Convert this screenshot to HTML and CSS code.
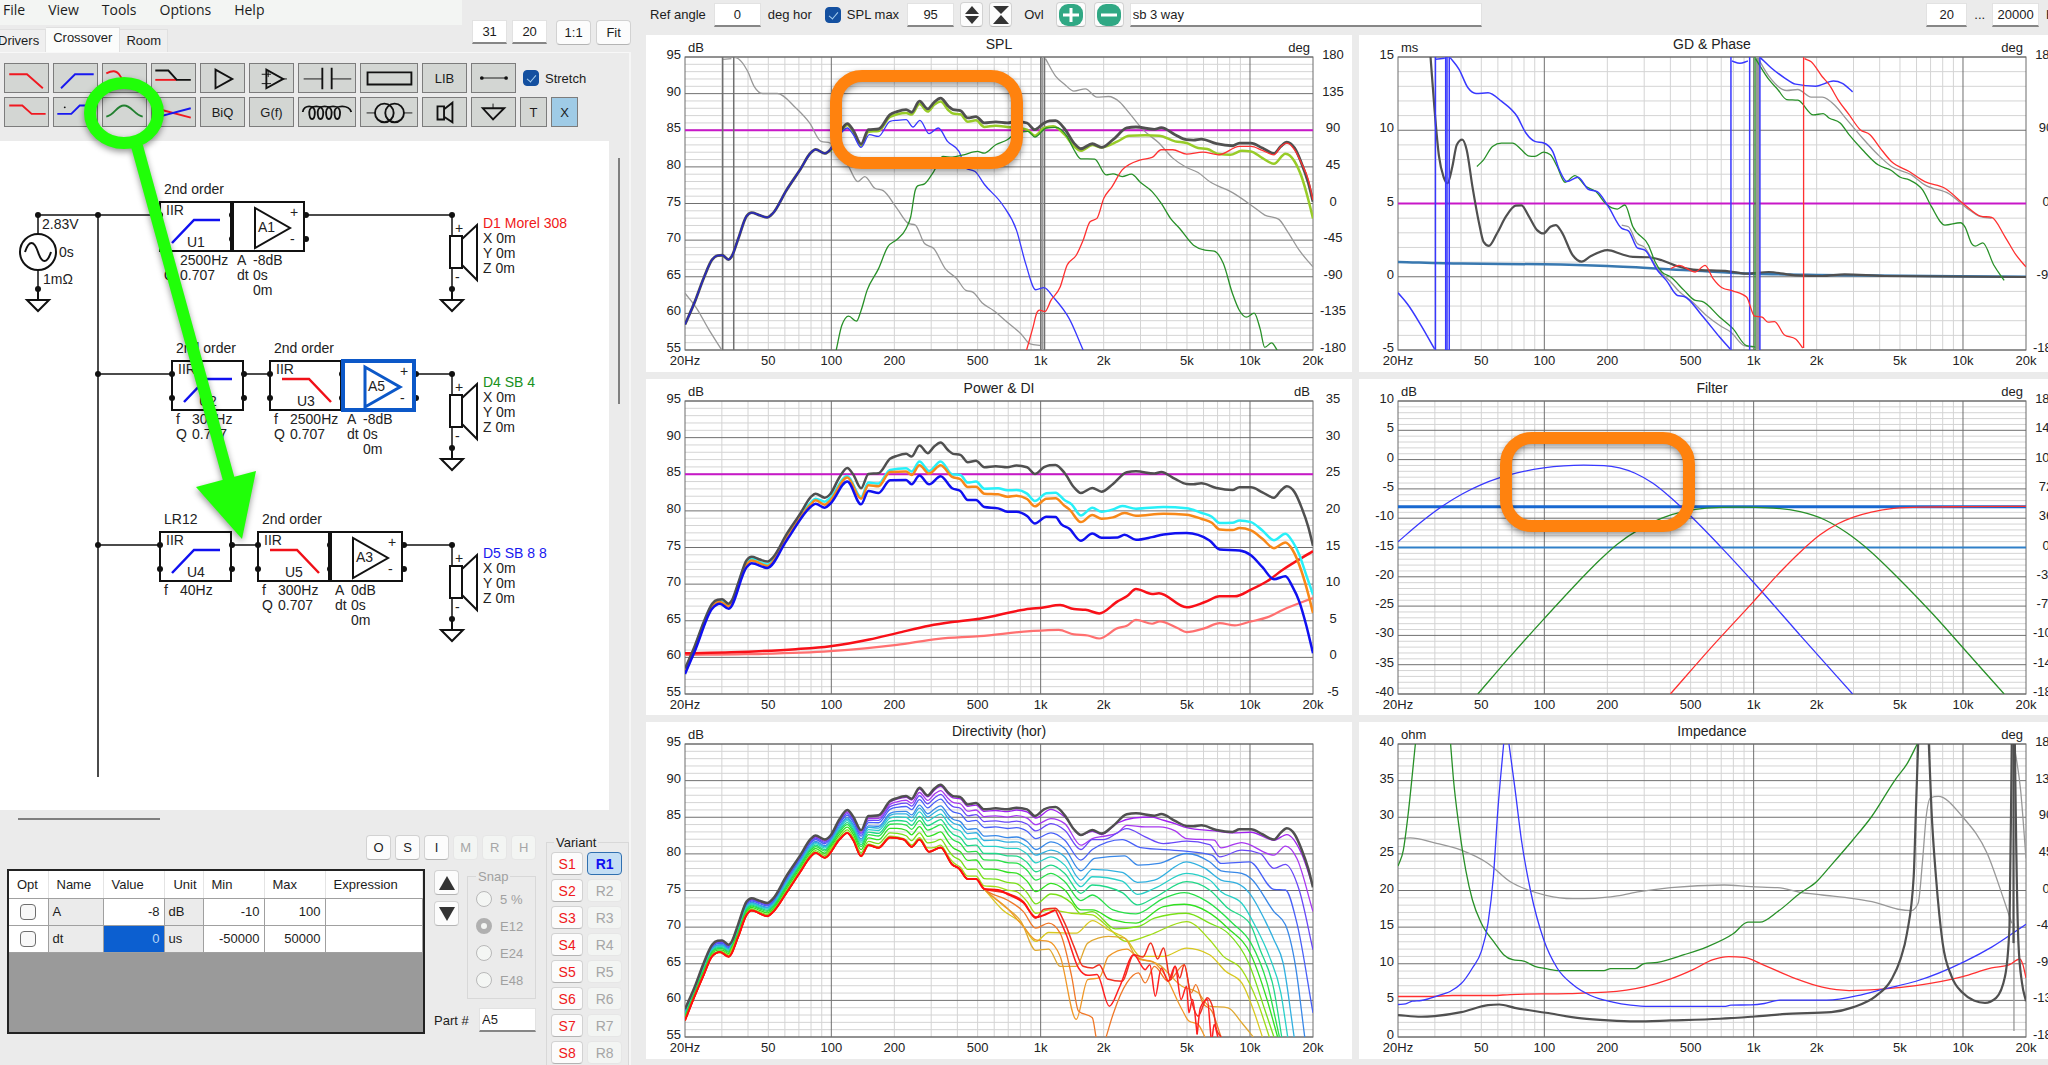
FILE: index.html
```html
<!DOCTYPE html>
<html lang="en">
<head>
    <meta charset="UTF-8">
    <meta name="viewport" content="width=device-width, initial-scale=1.0">
    <title>Crossover</title>
    <link rel="stylesheet" href="styles.css">
</head>
<body>
<div class="app">

    <aside class="side">
        <div class="side-top">
            <div class="top-left">
                <nav class="menu">
                    <a href="#">File</a>
                    <a href="#">View</a>
                    <a href="#">Tools</a>
                    <a href="#">Options</a>
                    <a href="#">Help</a>
                </nav>
                <div class="tabs">
                    <button class="tab">Drivers</button>
                    <button class="tab active">Crossover</button>
                    <button class="tab">Room</button>
                </div>
            </div>
            <div class="zoom-box">
                <input class="field" type="text" value="31" aria-label="Grid width">
                <input class="field" type="text" value="20" aria-label="Grid height">
                <button class="btn">1:1</button>
                <button class="btn">Fit</button>
            </div>
        </div>

        <div class="tab-page">
            <div class="parts">
                <div class="parts-row">
                    <button class="part" aria-label="Low pass"><svg viewBox="0 0 45 30"><path class="r" d="M4 11H23L40 26"/></svg></button>
                    <button class="part" aria-label="High pass"><svg viewBox="0 0 45 30"><path class="b" d="M7 26L22 11H42"/></svg></button>
                    <button class="part" aria-label="Resonant low pass"><svg viewBox="0 0 45 30"><path class="r" d="M3 10C9 7 14 6 18 13L25 24"/></svg></button>
                    <button class="part" aria-label="Low shelf"><svg viewBox="0 0 45 30"><path class="r" d="M3 17H26"/><path class="k" d="M3 7H17L26 17H41"/></svg></button>
                    <button class="part" aria-label="Amplifier"><svg viewBox="0 0 45 30"><path class="k" d="M15 6V26L33 16Z"/></svg></button>
                    <button class="part" aria-label="Op amp"><svg viewBox="0 0 45 30"><path class="k" d="M17 6V26L35 16Z"/><path class="w" d="M12 11H22M12 21H22M35 16H39M19 8V14"/></svg></button>
                    <button class="part wide" aria-label="Capacitor"><svg viewBox="0 0 60 30"><path class="w" d="M5 16H25M35 16H56"/><path class="k" d="M25 4V27M35 4V27"/></svg></button>
                    <button class="part wide" aria-label="Resistor"><svg viewBox="0 0 60 30"><path class="k" d="M7 9H54V22H7Z"/></svg></button>
                    <button class="part">LIB</button>
                    <button class="part" aria-label="Wire"><svg viewBox="0 0 45 30"><path class="w" d="M10 15H36"/><circle cx="10" cy="15" r="2"/><circle cx="36" cy="15" r="2"/></svg></button>
                    <label class="check"><input type="checkbox" checked> Stretch</label>
                </div>
                <div class="parts-row">
                    <button class="part" aria-label="Shelf"><svg viewBox="0 0 45 30"><path class="r" d="M4 8H18L28 17H43"/></svg></button>
                    <button class="part" aria-label="High shelf"><svg viewBox="0 0 45 30"><path class="b" d="M3 17H18L27 8H42"/><circle cx="11" cy="10" r="1"/></svg></button>
                    <button class="part" aria-label="Peak"><svg viewBox="0 0 45 30"><path class="g" d="M3 20C12 18 14 8 22 8S33 18 42 20"/></svg></button>
                    <button class="part" aria-label="Tilt"><svg viewBox="0 0 45 30"><path class="r" d="M3 11L41 21"/><path class="b" d="M3 21L41 11"/></svg></button>
                    <button class="part">BiQ</button>
                    <button class="part">G(f)</button>
                    <button class="part wide" aria-label="Inductor"><svg viewBox="0 0 60 30"><path class="k" d="M4 15C5 7 17 7 17 15C17 25 11 25 11 15C11 7 26 7 26 15C26 25 20 25 20 15C20 7 35 7 35 15C35 25 29 25 29 15C29 7 44 7 44 15C44 25 38 25 38 15C38 7 54 7 56 15"/></svg></button>
                    <button class="part wide" aria-label="Transformer"><svg viewBox="0 0 60 30"><circle class="k" cx="25" cy="16" r="10"/><circle class="k" cx="36" cy="16" r="10"/><path class="w" d="M6 16H15M46 16H55"/></svg></button>
                    <button class="part" aria-label="Driver"><svg viewBox="0 0 45 30"><path class="k" d="M15 9H22V23H15ZM22 12L31 5V26L22 20"/></svg></button>
                    <button class="part" aria-label="Ground"><svg viewBox="0 0 45 30"><path class="k" d="M11 11H34L22 23Z"/><path class="w" d="M22 6V11"/></svg></button>
                    <button class="part small">T</button>
                    <button class="part small on">X</button>
                </div>
            </div>

            <div class="canvas-wrap">
                <svg class="schematic" id="schematic" role="img" aria-label="Crossover schematic"></svg>
                <div class="vscroll"></div>
            </div>
            <div class="hscroll"></div>

            <div class="lower">
                <div class="inspector">
                    <div class="modes">
                        <button class="btn">O</button>
                        <button class="btn">S</button>
                        <button class="btn">I</button>
                        <button class="btn" disabled>M</button>
                        <button class="btn" disabled>R</button>
                        <button class="btn" disabled>H</button>
                    </div>
                    <div class="inspector-row">
                        <div class="grid-box">
                            <table>
                                <colgroup>
                                    <col class="c-opt"><col class="c-name"><col class="c-num"><col class="c-opt"><col class="c-num"><col class="c-num"><col>
                                </colgroup>
                                <thead>
                                    <tr><th>Opt</th><th>Name</th><th>Value</th><th>Unit</th><th>Min</th><th>Max</th><th>Expression</th></tr>
                                </thead>
                                <tbody>
                                    <tr>
                                        <td class="opt"><input type="checkbox" aria-label="Optimize A"></td>
                                        <td class="fixed">A</td><td class="num">-8</td><td class="fixed">dB</td>
                                        <td class="num">-10</td><td class="num">100</td><td></td>
                                    </tr>
                                    <tr>
                                        <td class="opt"><input type="checkbox" aria-label="Optimize dt"></td>
                                        <td class="fixed">dt</td><td class="num selected">0</td><td class="fixed">us</td>
                                        <td class="num">-50000</td><td class="num">50000</td><td></td>
                                    </tr>
                                </tbody>
                            </table>
                        </div>
                        <div class="tune">
                            <div class="tune-row">
                                <div class="arrows">
                                    <button class="btn" aria-label="Up"><svg viewBox="0 0 16 14"><path d="M8 0L16 14H0Z"/></svg></button>
                                    <button class="btn" aria-label="Down"><svg viewBox="0 0 16 14"><path d="M8 14L16 0H0Z"/></svg></button>
                                </div>
                                <fieldset class="snap" disabled>
                                    <legend>Snap</legend>
                                    <label><input type="radio" name="snap"> 5 %</label>
                                    <label><input type="radio" name="snap" checked> E12</label>
                                    <label><input type="radio" name="snap"> E24</label>
                                    <label><input type="radio" name="snap"> E48</label>
                                </fieldset>
                            </div>
                            <div class="part-id">
                                <label for="partNo">Part #</label>
                                <input class="field" id="partNo" type="text" value="A5">
                            </div>
                        </div>
                    </div>
                </div>
                <fieldset class="variant">
                    <legend>Variant</legend>
                    <div class="variant-grid" id="variants"></div>
                </fieldset>
            </div>
        </div>

        <svg class="marker" width="300" height="560">
            <ellipse cx="124" cy="113" rx="34" ry="30"/>
            <path d="M137 146L229 480"/>
            <path class="head" d="M196 487L256 471L242 539Z"/>
        </svg>
    </aside>

    <main class="work">
        <div class="toolbar">
            <label for="refAngle">Ref angle</label>
            <input class="field num-field" id="refAngle" type="text" value="0">
            <span class="unit">deg hor</span>
            <label class="check"><input type="checkbox" checked> SPL max</label>
            <input class="field num-field" type="text" value="95" aria-label="SPL max">
            <button class="btn icon-btn" aria-label="Expand range"><svg viewBox="0 0 16 18"><path d="M8 0L15 8H1ZM8 18L15 10H1Z"/></svg></button>
            <button class="btn icon-btn" aria-label="Shrink range"><svg viewBox="0 0 16 18"><path d="M0 0H16L8 8ZM8 9L16 18H0Z"/></svg></button>
            <label class="ovl" for="overlay">Ovl</label>
            <button class="btn round-btn" aria-label="Add overlay"><svg viewBox="0 0 24 22"><rect width="24" height="22" rx="9"/><path d="M12 4V18M4 11H20"/></svg></button>
            <button class="btn round-btn" aria-label="Remove overlay"><svg viewBox="0 0 24 22"><rect width="24" height="22" rx="9"/><path d="M4 11H20"/></svg></button>
            <input class="field overlay" id="overlay" type="text" value="sb 3 way">
            <div class="freq">
                <input class="field low" type="text" value="20" aria-label="From">
                <span>...</span>
                <input class="field high" type="text" value="20000" aria-label="To">
                <span>Hz</span>
            </div>
        </div>
        <div class="charts">
            <section class="chart" id="spl"><div class="highlight spl-highlight"></div></section>
            <section class="chart" id="gd"></section>
            <section class="chart" id="power"></section>
            <section class="chart" id="filter"><div class="highlight filter-highlight"></div></section>
            <section class="chart" id="directivity"></section>
            <section class="chart" id="impedance"></section>
        </div>
    </main>
</div>
<script src="script.js"></script>
</body>
</html>
```

FILE: styles.css
```css
* {
    box-sizing: border-box;
}

body {
    margin: 0;
    background: #ebebeb;
    color: #1c1c1c;
    font-family: "Liberation Sans", Arial, sans-serif;
    font-size: 13px;
    overflow: hidden;
}

button, input {
    font: inherit;
    color: inherit;
    margin: 0;
}

.app {
    display: grid;
    grid-template-columns: minmax(640px, 31.5%) 1fr;
    height: 100vh;
}

/* shared controls */
.field {
    height: 24px;
    padding: 0 4px;
    border: 1px solid #e2e2e2;
    border-bottom: 2px solid #868686;
    background: #fff;
}

.btn {
    height: 25px;
    padding: 0;
    border: 1px solid #d2d2d2;
    border-bottom-color: #b4b4b4;
    border-radius: 4px;
    background: #fcfcfc;
    display: flex;
    align-items: center;
    justify-content: center;
}

.btn:disabled {
    color: #a6a6a6;
    background: #f3f5f3;
    border-color: #e6e6e6;
}

.check {
    display: flex;
    align-items: center;
    gap: 6px;
    white-space: nowrap;
}

input[type="checkbox"] {
    appearance: none;
    position: relative;
    width: 16px;
    height: 16px;
    border: 1px solid #6e6e6e;
    border-radius: 4px;
    background: #f8f8f8;
}

input[type="checkbox"]:checked {
    background: #1450a0;
    border-color: #1450a0;
}

input[type="checkbox"]:checked::after {
    content: "";
    position: absolute;
    left: 5px;
    top: 2px;
    width: 4px;
    height: 8px;
    border: solid #a8d0f0;
    border-width: 0 1px 1px 0;
    transform: rotate(40deg);
}

/* left side */
.side {
    position: relative;
    display: flex;
    flex-direction: column;
    min-width: 0;
    height: 100vh;
    padding-right: 14px;
    overflow: hidden;
}

.side-top {
    display: flex;
    justify-content: space-between;
    height: 52px;
}

.menu {
    display: flex;
    gap: 23px;
    width: 462px;
    height: 25px;
    padding: 0 3px;
    background: #f3f5f3;
    font-family: "Open Sans", sans-serif;
    font-size: 14px;
    line-height: 20px;
}

.menu a {
    color: inherit;
    text-decoration: none;
}

.tabs {
    display: flex;
    align-items: flex-end;
    height: 27px;
    margin-left: -8px;
}

.tab {
    height: 23px;
    padding: 0 6px 2px;
    border: 1px solid #e0e0e0;
    border-width: 1px 1px 0 0;
    background: #efefef;
}

.tab.active {
    height: 25px;
    padding: 0 7px 5px;
    background: #fbfcfb;
}

.zoom-box {
    display: flex;
    gap: 5px;
    padding-top: 20px;
}

.zoom-box .field {
    width: 35px;
    text-align: center;
}

.zoom-box .btn {
    width: 35px;
}

.zoom-box .btn:nth-of-type(1) {
    margin-left: 4px;
}

.tab-page {
    flex: 1;
    display: flex;
    flex-direction: column;
    min-height: 0;
    border-top: 1px solid #f8f8f8;
    border-right: 2px solid #f6f6f6;
}

.parts {
    display: flex;
    flex-direction: column;
    gap: 4px;
    padding: 10px 4px 14px;
}

.parts-row {
    display: flex;
    gap: 4px;
}

.part {
    flex: none;
    width: 45px;
    height: 30px;
    padding: 0;
    border: 1px solid #7c7c7c;
    background: #d3d6d3;
}

.part.wide {
    width: 58px;
}

.part.small {
    width: 27px;
}

.part.on {
    background: #9fcbe6;
}

.part svg {
    display: block;
    width: 100%;
    height: 100%;
    fill: #111;
}

.part path, .part circle.k {
    fill: none;
    stroke-width: 2;
}

.part .r { stroke: #f01820; }
.part .b { stroke: #1818f0; }
.part .g { stroke: #228030; }
.part .k { stroke: #111; }
.part .w { stroke: #111; stroke-width: 1; }

.parts .check {
    margin-left: 3px;
}

.canvas-wrap {
    flex: 1;
    display: flex;
    gap: 9px;
    min-height: 0;
}

.schematic {
    flex: 1;
    min-width: 0;
    height: 100%;
    background: #fff;
    font-size: 14px;
    fill: #222;
}

.vscroll {
    width: 2px;
    height: 246px;
    margin: 17px 9px 0 0;
    background: #808080;
}

.hscroll {
    width: 142px;
    height: 2px;
    margin: 8px 0 0 18px;
    background: #808080;
}

.lower {
    display: flex;
    justify-content: space-between;
    gap: 10px;
    height: 245px;
    padding: 15px 0 0 7px;
}

.inspector {
    flex: 1;
}

.modes {
    display: flex;
    justify-content: flex-end;
    gap: 4px;
}

.modes .btn {
    width: 25px;
}

.inspector-row {
    display: flex;
    gap: 9px;
    margin-top: 9px;
}

.grid-box {
    flex: 1;
    height: 165px;
    border: 2px solid #222;
    background: #9a9a9a;
}

table {
    width: 100%;
    border-collapse: collapse;
    table-layout: fixed;
    background: #fff;
}

.c-opt { width: 39px; }
.c-name { width: 55px; }
.c-num { width: 61px; }

th, td {
    height: 27px;
    padding: 0 4px;
    border-right: 1px solid #a0a0a0;
    border-bottom: 1px solid #a0a0a0;
    font-weight: normal;
    text-align: left;
}

th {
    padding: 0 8px;
    border-right-color: #e4e4e4;
}

th:nth-child(4) {
    padding-right: 6px;
    text-align: right;
}

.opt input {
    display: block;
    margin: auto;
}

.fixed { background: #ebebeb; }
.num { text-align: right; }

.selected {
    background: #0c5fd0;
    color: #b8d8f8;
}

.tune {
    width: 102px;
}

.tune-row {
    display: flex;
    gap: 8px;
}

.arrows {
    display: flex;
    flex-direction: column;
    gap: 6px;
    padding-top: 1px;
}

.arrows .btn {
    width: 25px;
}

.arrows svg {
    width: 16px;
    height: 14px;
    fill: #333;
}

fieldset {
    margin: 0;
    min-width: 0;
    border: 1px solid #d8d8d8;
}

.snap {
    flex: 1;
    height: 130px;
    padding: 7px 8px;
    color: #a0a0a0;
    display: flex;
    flex-direction: column;
    gap: 11px;
}

.snap label {
    display: flex;
    align-items: center;
    gap: 8px;
    height: 16px;
    white-space: nowrap;
}

legend {
    padding: 0 2px;
}

.snap input {
    appearance: none;
    width: 16px;
    height: 16px;
    border: 1px solid #b8b8b8;
    border-radius: 50%;
    background: #f4f6f4;
}

.snap input:checked {
    border: 5px solid #b0b0b0;
}

.part-id {
    display: flex;
    align-items: center;
    justify-content: space-between;
    margin-top: 9px;
}

.part-id .field {
    width: 57px;
    padding: 0 2px;
}

.variant {
    width: 83px;
    height: 260px;
    padding: 2px 4px;
}

.variant legend {
    margin-left: 3px;
}

.variant-grid {
    display: grid;
    grid-template-columns: 32px 35px;
    gap: 4px;
}

.variant-grid .btn {
    height: 23px;
    font-size: 14px;
}

.variant-grid .store {
    color: #f01820;
}

.variant-grid .current {
    border-color: #3070b0;
    background: #c4def4;
    color: #1010f0;
    font-weight: bold;
}

.marker {
    position: absolute;
    left: 0;
    top: 0;
    pointer-events: none;
    filter: drop-shadow(0 3px 3px rgba(0, 0, 0, 0.4));
    fill: none;
    stroke: #20ff08;
    stroke-width: 12;
}

.marker .head {
    fill: #20ff08;
    stroke: none;
}

/* right side */
.work {
    display: flex;
    flex-direction: column;
    min-width: 0;
    height: 100vh;
    overflow: hidden;
}

.toolbar {
    display: flex;
    align-items: center;
    height: 29px;
    margin: 0 -14px 6px 5px;
    white-space: nowrap;
}

.num-field {
    width: 47px;
    margin-left: 8px;
    text-align: center;
}

.unit {
    margin: 0 13px 0 7px;
}

.icon-btn {
    width: 23px;
    margin-left: 6px;
}

.icon-btn svg {
    width: 16px;
    height: 18px;
    fill: #333;
}

.ovl {
    margin: 0 4px 0 12px;
}

.round-btn {
    width: 30px;
    margin-left: 8px;
}

.round-btn svg {
    width: 24px;
    height: 22px;
}

.round-btn rect { fill: #30a884; }
.round-btn path { stroke: #fff; stroke-width: 3; }

.overlay {
    width: 352px;
    margin-left: 6px;
    padding: 0 2px;
}

.freq {
    display: flex;
    align-items: center;
    gap: 7px;
    margin-left: auto;
}

.freq .field {
    text-align: center;
    padding: 0;
}

.freq .low { width: 41px; }
.freq .high { width: 47px; }

.charts {
    flex: 1;
    display: grid;
    grid-template-columns: 1fr 1fr;
    grid-template-rows: repeat(3, minmax(0, 1fr));
    gap: 7px;
    min-height: 0;
    margin: 0 -17px 6px 1px;
}

.chart {
    position: relative;
    min-width: 0;
    background: #fff;
}

.chart-svg {
    display: block;
    width: 100%;
    height: 100%;
    fill: #222;
}

.chart-title {
    font-size: 14px;
}

.frame { fill: none; stroke: #6c6c6c; }
.minor { stroke: #d4d4d4; }
.major { stroke: #707070; }

.trace {
    fill: none;
    vector-effect: non-scaling-stroke;
    stroke-linejoin: round;
}

.highlight {
    position: absolute;
    border: 12px solid #ff820e;
    border-radius: 32px;
    filter: drop-shadow(0 3px 3px rgba(0, 0, 0, 0.4));
}

.spl-highlight {
    left: 26%;
    top: 35px;
    width: 193px;
    height: 99px;
}

.filter-highlight {
    left: 20%;
    top: 53px;
    width: 195px;
    height: 100px;
}
```

FILE: script.js
```js
// Variant buttons
const variants = document.getElementById('variants');
for (let i = 1; i <= 8; i++) {
    const store = document.createElement('button');
    store.className = 'btn store';
    store.innerText = 'S' + i;
    const recall = document.createElement('button');
    recall.className = 'btn';
    recall.innerText = 'R' + i;
    if (i === 1) {
        recall.classList.add('current');
    } else {
        recall.disabled = true;
    }
    variants.append(store, recall);
}

// Schematic
const INK = '#111';

function text(x, y, str, color) {
    return `<text x="${x}" y="${y}"${color ? ` fill="${color}"` : ''}>${str}</text>`;
}

function line(d, color = INK, width = 1.5) {
    return `<path d="${d}" fill="none" stroke="${color}" stroke-width="${width}"/>`;
}

function dot(x, y) {
    return `<circle cx="${x}" cy="${y}" r="3" fill="${INK}"/>`;
}

function ground(x, y) {
    return dot(x, y) + line(`M${x} ${y}V${y + 11}M${x - 11} ${y + 11}h22l-11 11z`, INK, 2);
}

function iir(x, y, type, name, order, values) {
    const shape = type === 'high' ? `M${x + 12} ${y + 41}l22 -23h26` : `M${x + 12} ${y + 18}h27l22 23`;
    let out = `<rect x="${x}" y="${y}" width="71" height="49" fill="#fff" stroke="${INK}" stroke-width="2"/>`;
    out += line(shape, type === 'high' ? '#1010f0' : '#f01018', 2.5);
    out += text(x + 4, y - 8, order) + text(x + 6, y + 13, 'IIR') + text(x + 27, y + 45, name);
    values.forEach(([k, v], i) => {
        out += text(x + 4, y + 63 + i * 15, k) + text(x + 20, y + 63 + i * 15, v);
    });
    return out + dot(x, y + 13) + dot(x, y + 37) + dot(x + 72, y + 13) + dot(x + 72, y + 37);
}

function amp(x, y, name, gain, selected) {
    const c = selected ? '#0c58c8' : INK;
    let out = dot(x + 73, y + 13) + dot(x + 73, y + 37);
    out += `<rect x="${x}" y="${y}" width="71" height="49" fill="#fff" stroke="${c}" stroke-width="${selected ? 4 : 2}"/>`;
    out += line(`M${x + 22} ${y + 6}v40l35 -20z`, c, selected ? 3 : 2);
    out += text(x + 25, y + 30, name) + text(x + 57, y + 15, '+') + text(x + 57, y + 42, '-');
    out += text(x + 4, y + 63, 'A') + text(x + 20, y + 63, gain);
    out += text(x + 4, y + 78, 'dt') + text(x + 20, y + 78, '0s') + text(x + 20, y + 93, '0m');
    return out;
}

function driver(x, y, name, color) {
    let out = dot(x, y) + line(`M${x} ${y}v74`);
    out += `<rect x="${x - 2}" y="${y + 21}" width="12" height="32" fill="#fff" stroke="${INK}" stroke-width="2"/>`;
    out += line(`M${x + 10} ${y + 24}l15 -14v55l-15 -15`, INK, 2) + ground(x, y + 74);
    out += text(x + 3, y + 18, '+') + text(x + 3, y + 67, '-');
    out += text(x + 31, y + 13, name, color);
    ['X', 'Y', 'Z'].forEach((axis, i) => {
        out += text(x + 31, y + 28 + i * 15, axis + ' 0m');
    });
    return out;
}

document.getElementById('schematic').innerHTML = '<g transform="translate(0 -141)">' +
    line('M38 233V215H160M98 215V777M98 374H172M98 545H160M243 374H270M231 545H258') +
    line('M306 215H452M415 374H452M402 545H452M38 271V289') +
    dot(38, 215) + dot(98, 215) + dot(98, 374) + dot(98, 545) + ground(38, 289) +
    '<circle cx="38" cy="252" r="18" fill="none" stroke="#111" stroke-width="2"/>' +
    line('M25 252C29 240 34 240 38 252S47 264 51 252', INK, 2) +
    text(42, 229, '2.83V') + text(59, 257, '0s') + text(43, 284, '1mΩ') +
    iir(160, 202, 'high', 'U1', '2nd order', [['f', '2500Hz'], ['Q', '0.707']]) +
    amp(233, 202, 'A1', '-8dB') + driver(452, 215, 'D1 Morel 308', '#f01818') +
    iir(172, 361, 'high', 'U2', '2nd order', [['f', '300Hz'], ['Q', '0.707']]) +
    iir(270, 361, 'low', 'U3', '2nd order', [['f', '2500Hz'], ['Q', '0.707']]) +
    amp(343, 361, 'A5', '-8dB', true) + driver(452, 374, 'D4 SB 4', '#189020') +
    iir(160, 532, 'high', 'U4', 'LR12', [['f', '40Hz']]) +
    iir(258, 532, 'low', 'U5', '2nd order', [['f', '300Hz'], ['Q', '0.707']]) +
    amp(331, 532, 'A3', '0dB') + driver(452, 545, 'D5 SB 8 8', '#1818f0') + '</g>';

// Charts. Traces are "x,y" pairs in the units of the chart's view, "|" starts a new run.
const parse = str => str.trim().split(/\s+/).map(p => p.split(',').map(Number));
const shift = (str, dy) => parse(str).map(([x, y]) => `${x},${y + dy}`).join(' ');

function valueAt(points, x) {
    if (x <= points[0][0]) return points[0][1];
    for (let i = 1; i < points.length; i++) {
        const [x0, y0] = points[i - 1];
        const [x1, y1] = points[i];
        if (x <= x1) return y0 + (y1 - y0) * (x - x0) / (x1 - x0);
    }
    return points[points.length - 1][1];
}

// Monotone cubic through the points
function smooth(points) {
    const n = points.length;
    if (n < 3) return 'M' + points.map(p => p.join(' ')).join('L');
    const slope = [], step = [];
    for (let i = 0; i < n - 1; i++) {
        step.push(points[i + 1][0] - points[i][0]);
        slope.push((points[i + 1][1] - points[i][1]) / step[i]);
    }
    const m = points.map((p, i) => {
        if (i === 0) return slope[0];
        if (i === n - 1) return slope[n - 2];
        const a = slope[i - 1], b = slope[i];
        const mid = (a * step[i] + b * step[i - 1]) / (step[i] + step[i - 1]);
        return (Math.sign(a) + Math.sign(b)) * Math.min(Math.abs(a), Math.abs(b), Math.abs(mid) / 2);
    });
    let d = 'M' + points[0].join(' ');
    for (let i = 0; i < n - 1; i++) {
        const [x0, y0] = points[i];
        const [x1, y1] = points[i + 1];
        const h = step[i] / 3;
        d += `C${x0 + h} ${y0 + m[i] * h} ${x1 - h} ${y1 - m[i + 1] * h} ${x1} ${y1}`;
    }
    return d;
}

const total = `99,972 120,905 140,832 158,778 170,766 180,765 194,778 200,770 215,715 233,648 244,638 260,645 278,652 290,640
    320,570 350,508 372,460 383,449 403,461 415,450 435,400 452,372 465,392 482,433 498,390 520,388 545,345 560,336 580,330 592,338
    609,305 627,328 641,308 655,296 672,320 682,330 698,333 714,355 732,351 750,370 775,367 800,370 820,365 843,370 860,390 880,370 892,364 905,363
    925,388 945,430 960,447 985,432 1005,443 1030,420 1060,385 1080,382 1120,389 1135,384 1165,405 1190,420 1205,421 1222,418 1255,432
    1290,438 1305,430 1330,430 1355,445 1380,461 1395,440 1408,427 1425,445 1440,490 1455,550 1465,605`;
const MAGENTA = '#c818c8', DARK = '#505050', GRAY = '#989898';
const BLUE = '#3838ff', GREEN = '#289028', RED = '#ff3030', STEEL = '#3878b0';

function directivityTraces() {
    const base = parse(shift(total, -73));
    const low = `99,933 120,860 140,795 158,740 175,727 194,741 215,680 233,615 244,602 278,619 290,607 320,548 350,485 372,440 383,428 403,443
        435,388 452,368 465,390 482,438 498,405 520,413 545,382 575,388 592,410 609,388 630,425 655,412 680,463 695,475 714,507 732,507 750,537`;
    const rear = parse(low + ' 780,540 800,550 820,555 840,580 862,622');
    const runs = [
        ['#a020f0', '862,323 895,297 925,320 960,375 985,363 1005,373 1040,338 1075,323 1115,320 1130,326 1165,340 1190,352 1250,362 1290,368 1330,366 1380,390 1408,373 1440,430 1465,530'],
        ['#a838f0', '862,343 895,325 925,340 960,405 985,385 1010,378 1040,368 1060,345 1100,350 1130,350 1165,362 1190,385 1250,390 1265,413 1310,397 1380,435 1405,408 1430,445 1465,605'],
        ['#6848f8', '862,362 895,340 925,360 960,418 985,388 1010,388 1060,355 1100,380 1140,400 1190,393 1240,403 1262,440 1310,420 1350,430 1380,475 1405,463 1435,540 1465,720'],
        ['#4860f8', '862,385 895,368 925,390 960,450 985,418 1050,388 1090,412 1180,422 1245,435 1265,460 1327,455 1380,538 1405,540 1430,640 1465,910'],
        ['#3888e8', '862,418 895,395 925,415 960,482 990,445 1055,437 1085,465 1130,460 1190,430 1240,455 1265,482 1310,490 1330,505 1380,605 1405,645 1427,770 1447,983'],
        ['#30b0e0', '862,435 895,420 925,440 960,510 985,478 1050,487 1083,517 1120,510 1190,455 1230,475 1265,510 1300,520 1327,550 1360,630 1380,690 1400,760 1424,983'],
        ['#28d0c8', '862,458 895,440 925,465 960,530 985,500 1050,513 1083,553 1120,535 1190,490 1240,510 1265,545 1310,580 1340,650 1370,740 1395,850 1410,983'],
        ['#20d888', '862,485 895,465 925,490 960,550 985,525 1050,548 1083,585 1120,563 1190,515 1240,540 1280,595 1327,640 1350,720 1380,840 1397,983'],
        ['#28e048', '862,510 895,490 925,515 960,572 985,555 1030,600 1080,612 1140,565 1185,548 1235,575 1290,640 1330,700 1365,820 1392,983'],
        ['#30e020', '862,545 895,520 925,540 960,600 985,600 1030,630 1080,640 1140,590 1185,583 1235,605 1280,655 1330,735 1365,870 1388,983'],
        ['#78e018', '862,582 895,552 940,580 960,612 985,605 1035,657 1085,650 1120,625 1190,610 1240,640 1280,670 1325,760 1360,900 1380,983'],
        ['#a0dc18', '862,610 890,600 940,610 985,615 1010,640 1060,695 1110,675 1190,635 1240,690 1270,740 1310,780 1345,880 1370,983']
    ];
    const traces = runs.map(([color, high]) => {
        const tail = parse(high);
        const t = (tail[0][1] - valueAt(base, 862)) / (622 - valueAt(base, 862));
        const head = base.filter(p => p[0] < 850).map(([x, y]) => [x, y + t * (valueAt(rear, x) - y)]);
        return [color, 1.3, head.concat(tail).map(p => p.join(',')).join(' ')];
    });
    const back = low + ' ';
    return traces.concat([
        ['#d8c820', 1.3, back + '790,600 830,640 862,695 890,668 950,670 985,632 1020,660 1060,690 1090,740 1140,740 1190,715 1240,735 1275,785 1310,820 1335,900 1355,983'],
        ['#e0a830', 1.3, back + '790,585 830,635 862,722 890,718 915,770 950,770 975,700 1020,680 1055,685 1080,740 1130,765 1180,830 1215,850 1240,890 1280,895 1310,940 1335,983'],
        ['#f09828', 1.3, back + '800,595 835,650 862,690 890,695 915,740 950,930 975,810 1000,805 1020,740 1060,718 1090,750 1115,755 1140,790 1180,900 1195,935 1215,945 1230,983'],
        ['#f07828', 1.3, back + '800,570 835,605 862,655 890,640 915,670 940,800 955,905 985,925 993,983 | 1015,983 1030,915 1060,820 1085,790 1100,820 1120,770 1150,815 1185,765 1200,850 1210,825 1225,880 1245,905 1265,983'],
        ['#f03020', 1.5, back + '800,550 835,575 862,625 880,598 905,595 925,640 945,710 965,770 985,775 1000,765 1018,808 1050,815 1075,735 1095,742 1112,700 1127,748 1140,715 1155,810 1165,770 1175,805 1185,765 1200,870 1215,920 1235,865 1248,900 1255,960 1265,983'],
        ['#ff1010', 2, back + '780,540 800,552 835,578 862,622 905,600'],
        ['#ff2020', 1.5, '905,600 930,680 955,775 975,797 995,795 1022,890 1045,830 1075,735 1100,780 1110,765 1122,860 1135,775 1150,815 1165,770 1178,870 1190,830 1195,910 1203,870 1213,975 | 1213,975 1220,895 1235,870 1243,983 | 1246,983 1250,945 1258,983'],
        [DARK, 2.5, shift(total, -73)]
    ]);
}

const charts = {
    spl: {
        title: 'SPL', left: 'dB', right: 'deg', view: [99, 173, 1366, 875], rows: [95, 55, 5], rightRows: [180, -45], line: 85,
        traces: [
            [GRAY, 1.3, `99,878 125,925 150,985 179,1048 | 182,180 200,178 | 207,174 215,178 235,215 250,262 268,282 300,282
                340,325 370,370 395,425 415,430 435,450 455,500 475,545 490,530 512,565 530,572 560,625 585,670 600,675 620,730 640,745 665,805 690,835
                710,870 725,875 745,907 770,930 800,965 830,1000 850,1030 873,1035 | 877,173 877,1048 |
                883,178 905,230 925,255 945,275 970,268 995,293 1020,291 1045,308 1065,340 1095,390 1130,430 1160,475 1190,503 1215,518 1240,545 1290,578
                1335,620 1360,645 1390,657 1410,695 1435,750 1465,800`],
            ['#707070', 1.5, '181,1048 181,173 | 205,173 205,1048 | 873,173 873,1048 | 881,173 881,1048'],
            ['#98cc28', 2.5, `415,455 435,404 452,376 465,397 482,438 498,396 520,394 545,352 580,340 592,345 609,313 627,336 641,316 655,306 672,332 682,342 698,344
                714,366 732,362 750,382 775,378 800,382 843,390 860,408 880,385 900,380 925,405 945,440 960,453 985,436 1005,443 1040,425 1065,408
                1100,407 1130,408 1165,425 1190,430 1215,445 1235,448 1260,463 1285,465 1310,453 1330,455 1355,475 1380,492 1405,462 1425,485
                1440,530 1455,600 1465,655`],
            [DARK, 2.8, total],
            ['#2828c0', 1.5, total.split(' 435,400')[0]],
            [BLUE, 1.3, `415,450 435,405 452,385 465,405 482,443 500,405 520,410 545,365 560,362 580,360 595,382 610,362 630,402 650,385 670,425 695,455 710,505 730,515
                750,553 790,615 820,690 840,790 862,868 880,862 900,890 935,955 965,1048`],
            [GREEN, 1.3, `428,1048 440,975 455,947 472,962 482,930 495,870 520,805 540,740 560,718 580,685 590,650 600,570 605,558 620,552 640,515 660,470
                680,472 705,465 735,455 750,460 775,435 800,420 820,400 845,395 860,412 885,385 905,383 930,410 945,450 960,477 990,478 1015,525
                1030,522 1050,530 1070,523 1090,548 1115,575 1135,610 1155,655 1175,685 1205,735 1230,750 1250,753 1270,790 1290,880 1305,930
                1320,950 1337,938 1350,985 1360,1040 1375,1027 1387,1048`],
            [RED, 1.3, `842,1048 855,985 865,935 870,929 882,933 895,900 915,860 930,795 950,765 965,720 980,665 995,655 1010,595 1028,560 1050,510
                1090,480 1115,473 1135,450 1160,450 1190,463 1225,457 1260,465 1305,440 1330,440 1355,452 1380,465 1395,440 1408,430 1425,450
                1440,490 1455,540 1465,600`]
        ]
    },
    gd: {
        title: 'GD &amp; Phase', left: 'ms', right: 'deg', view: [108, 173, 1409, 875], rows: [15, -5, 5], rightRows: [180, -90], line: 5,
        traces: [
            [STEEL, 2.5, '108,785 250,790 435,792 578,797 760,810 906,820 1047,824 1517,829'],
            [DARK, 2.2, `181,173 190,330 200,470 210,530 219,550 230,500 240,435 252,420 262,450 275,560 290,670 300,725 312,737 330,700 350,650 372,617
                385,616 400,645 420,690 434,700 450,680 462,675 475,695 500,765 520,784 540,768 578,750 610,762 635,770 670,771 700,780 735,798
                770,808 850,813 890,820 940,815 1000,825 1060,827 1110,822 1200,827 1517,830`],
            [GRAY, 1.3, `610,675 625,680 645,730 660,740 690,805 720,845 740,875 765,900 800,945 830,975 855,995 885,1035 910,1040 | 915,175 940,230 980,273
                1005,270 1035,293 1060,293 1090,320 1115,360 1150,415 1185,465 1215,500 1260,525 1290,555 1345,582 1385,625 1415,650 1440,655`],
            [GRAY, 4, '915,173 915,1048'],
            [GREEN, 1.3, `285,500 300,480 320,440 340,430 365,430 385,450 400,468 415,470 435,457 450,465 465,500 483,547 505,527 530,560 552,575 575,612
                600,627 617,615 635,680 670,735 685,785 700,815 720,830 750,870 775,900 790,903 830,950 860,985 890,1035 908,1038 | 909,1048 909,173 |
                910,178 940,240 960,270 980,300 1005,302 1040,346 1062,342 1075,355 1100,370 1120,405 1150,450 1185,495 1215,512 1235,532 1255,540
                1285,570 1305,620 1335,675 1370,668 1380,680 1395,730 1403,738 1420,728 1445,795 1468,840`],
            [BLUE, 1.5, `108,877 130,912 160,975 190,1045 | 192,1048 192,173 | 193,180 213,177 | 215,173 215,1048 | 218,173 218,1048 | 223,173 223,1048 |
                225,175 245,210 265,265 283,282 310,280 340,305 375,350 395,400 415,425 435,430 455,455 470,510 487,545 512,532 535,568 555,575
                580,620 610,685 625,692 645,743 662,750 690,810 710,840 735,885 750,888 790,945 830,1010 853,1045 | 855,1048 855,173 |
                857,185 875,192 893,185 | 897,173 897,1048 | 920,173 920,1048 | 921,175 945,205 975,235 1000,254 1045,260 1085,245 1105,252 1128,277`],
            [RED, 1.3, `720,805 738,795 775,815 797,795 815,835 835,862 860,872 890,890 908,947 925,950 938,965 953,963 975,1003 1000,1015 1016,1042 |
                1018,1042 1018,173 | 1020,178 1035,187 1060,232 1075,255 1095,300 1120,345 1145,390 1167,405 1190,445 1215,485 1255,515 1290,545
                1335,565 1380,615 1415,648 1440,652 1470,710 1495,765 1517,800`]
        ]
    },
    power: {
        title: 'Power &amp; DI', left: 'dB', right: 'dB', view: [99, 91, 1366, 876], rows: [95, 55, 5], rightRows: [35, -5], line: 85,
        traces: [
            ['#ff7070', 2.2, `99,850 230,848 415,839 560,820 650,802 740,794 850,779 912,775 945,789 975,792 1000,801 1040,770 1060,763 1080,745 1115,757
                1132,750 1170,770 1190,782 1230,770 1262,755 1295,762 1330,750 1365,738 1400,715 1465,680`],
            ['#f81018', 2.5, `99,845 200,842 340,833 415,824 500,804 560,785 630,763 680,752 740,742 850,712 875,709 915,701 945,713 970,715 1000,726 1040,690
                1060,675 1080,653 1115,668 1130,666 1190,708 1230,692 1262,675 1295,675 1330,655 1365,630 1400,595 1465,540`],
            ['#28f0f8', 2.5, `99,898 120,828 158,702 175,687 194,700 233,575 244,562 278,580 320,495 372,395 383,383 403,392 415,380 452,315 482,378 498,335
                520,338 545,297 580,292 592,302 609,272 630,300 655,272 680,310 698,312 714,335 732,332 750,353 780,352 800,358 820,357 843,368
                860,390 885,367 905,365 925,388 940,400 960,433 985,410 1005,422 1030,415 1050,405 1080,413 1140,408 1190,412 1222,425 1245,437
                1262,456 1290,455 1305,448 1330,453 1355,478 1380,507 1405,488 1420,510 1435,550 1450,610 1465,670`],
            ['#f88818', 2.5, `99,902 120,834 158,706 175,691 194,705 233,580 244,568 278,584 320,501 372,401 383,388 403,401 415,388 452,320 482,383 498,343
                520,346 545,303 580,302 592,312 609,283 630,308 655,283 680,318 698,325 714,348 732,347 750,368 780,370 800,377 820,374 843,384
                860,406 885,383 905,382 925,405 935,415 960,453 985,432 1005,443 1030,439 1055,426 1080,434 1140,428 1190,431 1222,443 1245,455
                1262,475 1290,477 1305,471 1330,478 1355,503 1380,531 1405,514 1420,535 1440,600 1455,670 1465,725`],
            [DARK, 2.5, shift(total, -81)],
            ['#1010f0', 2.5, `99,907 120,840 158,712 175,697 194,712 233,588 244,576 278,590 320,508 372,408 383,398 403,410 415,398 452,332 482,400 498,360
                520,366 545,328 580,327 592,340 609,314 630,340 655,316 680,352 698,360 714,387 732,387 750,408 780,412 800,422 820,422 843,435
                860,457 885,437 905,438 918,460 935,473 960,509 985,487 1005,500 1040,499 1055,491 1080,506 1115,498 1140,490 1190,486 1240,508
                1262,535 1305,538 1330,552 1355,588 1380,624 1405,615 1420,645 1435,690 1450,760 1465,845`]
        ]
    },
    filter: {
        title: 'Filter', left: 'dB', right: 'deg', view: [108, 91, 1409, 876], rows: [10, -40, 5], rightRows: [180, -36],
        traces: [
            ['#1868d0', 3, '108,407 1517,407'],
            ['#3080c8', 2, '108,529 1517,529'],
            [BLUE, 1.3, `108,512 158,455 208,405 252,369 295,341 335,321 375,306 435,291 480,285 525,283 570,284 605,291 640,307 680,337 715,374 760,429
                830,524 905,632 1016,800 1128,967`],
            [GREEN, 1.3, `287,967 361,853 435,743 510,635 560,567 600,519 650,474 700,441 750,421 800,411 870,408 950,411 1010,422 1065,446 1115,485
                1165,537 1230,620 1310,731 1389,849 1468,967`],
            [RED, 1.3, '719,967 812,826 906,690 960,610 1010,543 1055,491 1095,458 1130,438 1170,423 1220,412 1280,408 1380,407 1517,406']
        ]
    },
    directivity: {
        title: 'Directivity (hor)', left: 'dB', view: [99, 100, 1366, 883], rows: [95, 55, 5],
        traces: directivityTraces()
    },
    impedance: {
        title: 'Impedance', left: 'ohm', right: 'deg', view: [108, 100, 1409, 883], rows: [40, 0, 5], rightRows: [180, -45],
        traces: [
            [GRAY, 1.3, `108,385 135,383 190,398 250,420 310,460 360,515 400,540 440,556 500,566 550,565 600,558 650,545 720,533 840,525 900,530 960,533
                1010,547 1060,555 1130,566 1180,578 1230,598 1260,602 1275,580 1285,450 1293,320 1303,262 1320,258 1375,320 1430,430 1465,560
                1485,640 | 1490,640 1490,965 | 1490,100 1505,240 1517,445`],
            [GREEN, 1.3, `108,468 120,420 130,320 147,100 | 226,100 232,200 245,350 260,480 275,570 295,640 325,700 345,735 365,750 390,754 415,770 440,777
                470,783 570,783 585,777 640,777 660,762 690,758 750,735 800,712 860,672 893,637 920,637 960,605 1010,550 1047,515 1080,465
                1128,390 1170,320 1225,205 1250,160 1273,100`],
            [RED, 1.3, `108,861 180,861 230,858 320,858 360,855 490,852 575,848 660,832 720,808 770,780 815,750 850,741 885,743 930,767 1000,807 1060,833
                1120,843 1200,838 1270,828 1375,801 1440,775 1480,765 1503,748 1510,765 1517,805`],
            [BLUE, 1.3, `108,885 125,883 140,875 160,873 190,862 250,822 275,775 295,725 310,640 322,500 332,300 345,100 | 357,100 370,230 385,390 405,540
                435,690 465,775 500,825 540,858 590,878 630,887 670,891 840,891 855,887 900,886 930,882 965,872 1070,872 1150,855 1200,838
                1270,815 1380,755 1440,712 1517,643`],
            [DARK, 2.2, `108,917 160,922 190,920 250,908 310,887 335,885 370,895 440,910 520,927 580,933 640,936 720,933 830,928 900,922 940,918 970,914
                1080,908 1130,893 1180,860 1215,810 1235,750 1250,670 1265,500 1270,300 1275,100 | 1299,100 1305,300 1315,500 1330,700 1350,800
                1375,850 1400,873 1425,880 1450,865 1470,800 1480,650 1485,100 | 1489,100 1489,700 | 1492,100 1495,400 1500,700 1508,820 1517,875`]
        ]
    }
};

const freqLabels = { 20: '20Hz', 50: '50', 100: '100', 200: '200', 500: '500', 1000: '1k', 2000: '2k', 5000: '5k', 10000: '10k', 20000: '20k' };

function drawChart(id) {
    const chart = charts[id];
    const box = document.getElementById(id);
    const w = box.clientWidth, h = box.clientHeight;
    const left = 39, top = 22, right = w - 39, bottom = h - 22;
    const pw = right - left, ph = bottom - top;
    const [max, min, step] = chart.rows;
    const fx = f => left + pw * Math.log10(f / 20) / 3;
    const vy = v => top + ph * (max - v) / (max - min);
    let minor = '', major = '', labels = '';

    [10, 100, 1000, 10000].forEach(decade => {
        for (let k = 1; k < 10; k++) {
            const f = decade * k;
            if (f <= 20 || f >= 20000) continue;
            const d = `M${fx(f)} ${top}V${bottom}`;
            if (k === 1) major += d; else minor += d;
        }
    });
    for (let v = max; v >= min; v--) {
        const d = `M${left} ${vy(v)}H${right}`;
        if ((max - v) % step === 0) {
            major += d;
            labels += `<text x="${left - 4}" y="${vy(v) + 2}" text-anchor="end">${v}</text>`;
            if (chart.rightRows) {
                const value = chart.rightRows[0] + chart.rightRows[1] * (max - v) / step;
                labels += `<text x="${right + 20}" y="${vy(v) + 2}" text-anchor="middle">${value}</text>`;
            }
        } else {
            minor += d;
        }
    }
    for (const f in freqLabels) {
        labels += `<text x="${fx(f)}" y="${bottom + 15}" text-anchor="middle">${freqLabels[f]}</text>`;
    }
    labels += `<text x="${left + 3}" y="${top - 5}">${chart.left}</text>`;
    if (chart.right) labels += `<text x="${right - 3}" y="${top - 5}" text-anchor="end">${chart.right}</text>`;
    labels += `<text class="chart-title" x="${(left + right) / 2}" y="14" text-anchor="middle">${chart.title}</text>`;

    const paths = chart.traces.map(([color, width, str]) =>
        str.split('|').map(run => `<path class="trace" d="${smooth(parse(run))}" stroke="${color}" stroke-width="${width}"/>`).join('')
    ).join('');
    const mark = chart.line === undefined ? '' : `<path d="M${left} ${vy(chart.line)}H${right}" stroke="${MAGENTA}" stroke-width="2"/>`;

    const old = box.querySelector('.chart-svg');
    if (old) old.remove();
    box.insertAdjacentHTML('afterbegin', `<svg class="chart-svg">
        <path class="minor" d="${minor}"/><path class="major" d="${major}"/>
        <rect class="frame" x="${left}" y="${top}" width="${pw}" height="${ph}"/>${mark}
        <svg x="${left}" y="${top}" width="${pw}" height="${ph}" viewBox="${chart.view.join(' ')}" preserveAspectRatio="none">${paths}</svg>
        ${labels}</svg>`);
}

function drawAll() {
    Object.keys(charts).forEach(drawChart);
}

drawAll();
window.addEventListener('resize', drawAll);
```
